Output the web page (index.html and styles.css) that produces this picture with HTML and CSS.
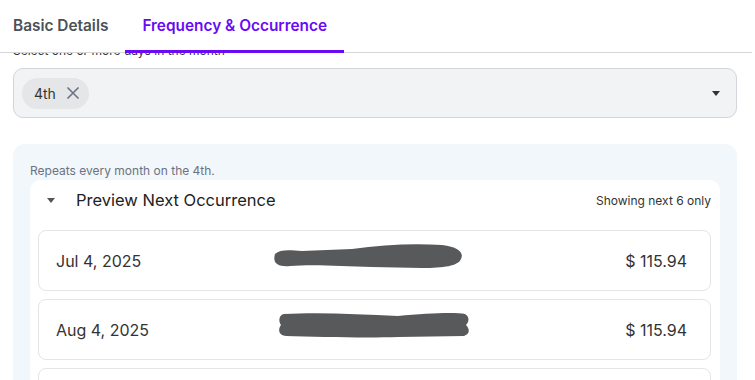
FILE: index.html
```html
<!DOCTYPE html>
<html lang="en">
<head>
    <meta charset="UTF-8">
    <meta name="viewport" content="width=device-width, initial-scale=1.0">
    <title>Frequency &amp; Occurrence</title>
    <link rel="stylesheet" href="styles.css">
</head>
<body>
    <div class="tabs">
        <div class="tab">Basic Details</div>
        <div class="tab active">Frequency &amp; Occurrence</div>
    </div>

    <div class="content">
        <div class="field-label">Select one or more days in the month</div>

        <div class="select">
            <span class="chip">
                4th
                <svg class="chip-x" width="14" height="14" viewBox="0 0 14 14">
                    <path d="M1.5 1.5 L12.5 12.5 M12.5 1.5 L1.5 12.5" stroke="#6b7280" stroke-width="1.6" fill="none"/>
                </svg>
            </span>
            <svg class="caret" width="8" height="5" viewBox="0 0 8 5">
                <path d="M0 0 H8 L4 5 Z" fill="#333"/>
            </svg>
        </div>

        <div class="panel">
            <div class="repeat-note">Repeats every month on the 4th.</div>

            <div class="preview">
                <div class="preview-head">
                    <svg class="preview-caret" width="8" height="5" viewBox="0 0 8 5">
                        <path d="M0 0 H8 L4 5 Z" fill="#555"/>
                    </svg>
                    <span class="preview-title">Preview Next Occurrence</span>
                    <span class="preview-note">Showing next 6 only</span>
                </div>

                <div class="occurrence">
                    <span class="date">Jul 4, 2025</span>
                    <svg class="redact redact-one" width="192" height="26" viewBox="0 0 192 26">
                        <path d="M3,11 C8,6 18,7 30,8 L80,6 C110,2 140,0 170,2 C187,4 192,10 189,16 C186,23 172,25 150,25 L100,24 C70,23 40,21 18,23 C7,24 0,21 3,11 Z" fill="#58595b"/>
                    </svg>
                    <span class="amount">$ 115.94</span>
                </div>

                <div class="occurrence">
                    <span class="date">Aug 4, 2025</span>
                    <svg class="redact redact-two" width="192" height="28" viewBox="0 0 192 28">
                        <path d="M6,3 C40,1 80,3 120,5 C150,2 178,1 187,3 C192,6 191,11 188,14 C192,18 192,23 186,25 L120,26 C90,27 40,26 8,25 C0,24 0,18 3,14 C0,10 1,4 6,3 Z" fill="#58595b"/>
                    </svg>
                    <span class="amount">$ 115.94</span>
                </div>

                <div class="occurrence"></div>
            </div>
        </div>
    </div>
</body>
</html>
```

FILE: styles.css
```css
body {
    margin: 0;
    font-family: 'Inter', 'Liberation Sans', sans-serif;
    background-color: #fff;
    color: #222;
    height: 380px;
    overflow: hidden;
}

.tabs {
    display: flex;
    height: 52px;
    border-bottom: 1px solid #d4d6da;
    margin-right: 3px;
    position: relative;
    z-index: 1;
    background-color: #fff;
}

.tab {
    padding: 0 17px;
    font-size: 15.4px;
    font-weight: 600;
    color: #4b5159;
    display: flex;
    align-items: center;
    padding-bottom: 2px;
}

.tab:first-child {
    padding-left: 13px;
}

.tab.active {
    color: #6a0af5;
    border-bottom: 3px solid #6a0af5;
    margin-bottom: -1px;
    padding-bottom: 0;
}

.content {
    padding: 0 18px 0 13px;
    overflow: hidden;
}

.field-label {
    font-size: 12px;
    line-height: 16px;
    color: #333;
    margin-top: -10px;
    margin-bottom: 9px;
}

.select {
    height: 48px;
    background-color: #f2f3f5;
    border: 1px solid #d2d5d9;
    border-radius: 10px;
    display: flex;
    align-items: center;
    justify-content: space-between;
    padding: 0 16px 0 8px;
}

.chip {
    display: flex;
    align-items: center;
    gap: 10px;
    height: 31px;
    padding: 0 9px 0 12px;
    background-color: #e4e6e8;
    border-radius: 16px;
    font-size: 14px;
    color: #333;
}

.panel {
    margin-top: 26px;
    background-color: #f2f7fb;
    border-radius: 12px 12px 0 0;
    padding: 19px 17px 0 17px;
    height: 300px;
}

.repeat-note {
    font-size: 12px;
    line-height: 16px;
    color: #6b7280;
    margin-bottom: 1px;
}

.preview {
    background-color: #fff;
    border-radius: 10px 10px 0 0;
    padding: 0 9px 0 8px;
    height: 300px;
}

.preview-head {
    height: 40px;
    display: flex;
    align-items: center;
    padding-left: 9px;
    margin-bottom: 10px;
}

.preview-caret {
    margin-right: 21px;
}

.preview-title {
    font-size: 16.5px;
    color: #222;
    flex: 1;
}

.preview-note {
    font-size: 12px;
    color: #333;
}

.occurrence {
    height: 59px;
    border: 1px solid #e3e5e8;
    border-radius: 8px;
    display: grid;
    grid-template-columns: 1fr auto 1fr;
    align-items: center;
    padding: 0 23px 0 17px;
    margin-bottom: 8px;
    font-size: 16px;
    color: #333;
}

.amount {
    text-align: right;
}

.redact-one {
    margin: 0 8px 10px 0;
}

.redact-two {
    margin: 0 0 10px 4px;
}
```
